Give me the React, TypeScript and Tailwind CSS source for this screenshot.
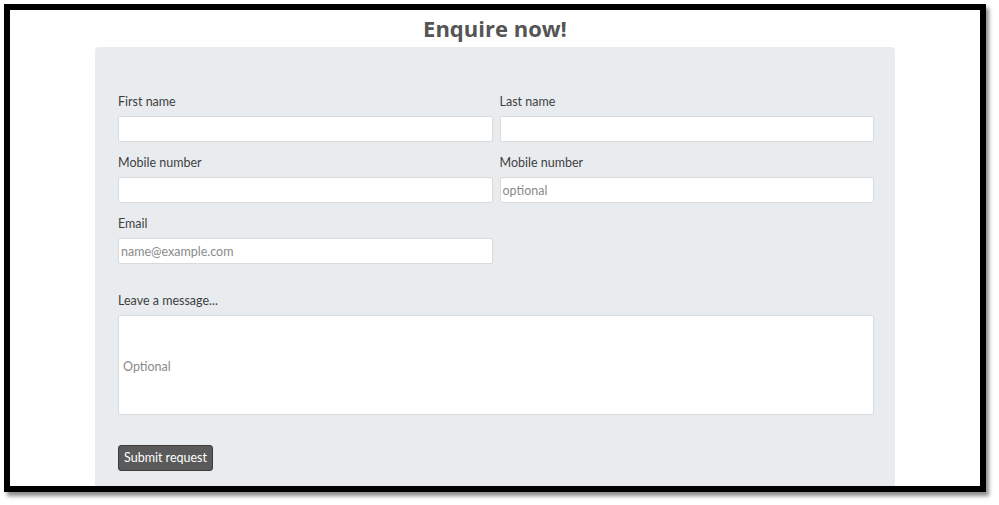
const font = { fontFamily: 'Lato, "Open Sans", Arial, sans-serif' };

function Field({
  label,
  placeholder,
  className = "",
}: {
  label: string;
  placeholder?: string;
  className?: string;
}) {
  return (
    <div className={`flex flex-col ${className}`}>
      <label className="h-[16px] text-[12.5px] leading-[16px] text-[#3f3f3f]">{label}</label>
      <input
        type="text"
        placeholder={placeholder}
        className="mt-[6px] h-[26px] w-full rounded-[2px] border border-[#dadada] bg-white px-[2px] text-[12.5px] text-[#333] outline-none placeholder:text-[#8a8a8a]"
      />
    </div>
  );
}

export default function App() {
  return (
    <div className="h-[505px] w-[999px] bg-white" style={font}>
      <div className="ml-[4px] pt-[4px]">
        <div className="h-[488px] w-[982px] overflow-hidden border-[6px] border-black bg-white shadow-[3px_4px_4px_rgba(0,0,0,0.45)]">
          <h1
            className="flex h-[37px] items-center justify-center text-[22px] font-bold text-[#555]"
            style={{ fontFamily: '"Open Sans", Arial, sans-serif' }}
          >
            Enquire now!
          </h1>

          <div className="ml-[85px] h-[480px] w-[800px] rounded-[4px] bg-[#e9ecef] pl-[23px] pr-[21px] pt-[47px]">
            <div className="grid grid-cols-2 gap-x-[7px] gap-y-[13px]">
              <Field label="First name" />
              <Field label="Last name" />
              <Field label="Mobile number" />
              <Field label="Mobile number" placeholder="optional" />
              <Field label="Email" placeholder="name@example.com" />
            </div>

            <div className="mt-[29px] flex flex-col">
              <label className="h-[16px] text-[12.5px] leading-[16px] text-[#3f3f3f]">
                Leave a message...
              </label>
              <textarea
                placeholder="Optional"
                className="mt-[6px] h-[100px] w-full resize-none rounded-[2px] border border-[#dadada] bg-white px-[4px] pt-[43px] text-[12.5px] leading-[16px] text-[#333] outline-none placeholder:text-[#8a8a8a]"
              />
            </div>

            <button
              type="button"
              className="mt-[30px] h-[26px] w-[95px] rounded-[3px] border border-[#3c3c3c] bg-[#5a5a5a] text-[12.5px] text-white"
            >
              Submit request
            </button>
          </div>
        </div>
      </div>
    </div>
  );
}
